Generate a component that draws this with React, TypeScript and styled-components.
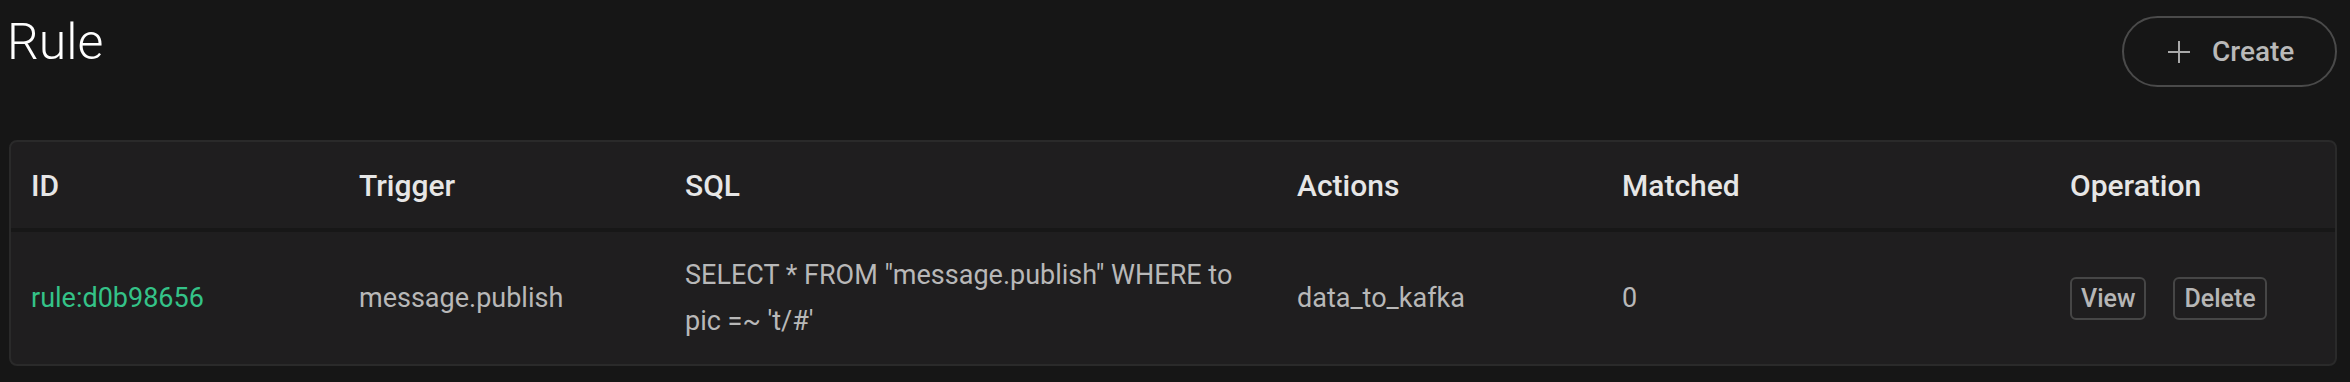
import React from "react";
import styled, { createGlobalStyle } from "styled-components";

type Rule = {
  id: string;
  trigger: string;
  sql: string;
  actions: string;
  matched: number;
};

const rules: Rule[] = [
  {
    id: "rule:d0b98656",
    trigger: "message.publish",
    sql: `SELECT * FROM "message.publish" WHERE topic =~ 't/#'`,
    actions: "data_to_kafka",
    matched: 0,
  },
];

const columns = [
  { title: "ID", width: 328 },
  { title: "Trigger", width: 326 },
  { title: "SQL", width: 612 },
  { title: "Actions", width: 325 },
  { title: "Matched", width: 448 },
  { title: "Operation" },
];

const GlobalStyle = createGlobalStyle`
  html, body {
    margin: 0;
    background: #161616;
    font-family: Roboto, "Liberation Sans", sans-serif;
  }
`;

const PlusIcon = () => (
  <svg width="22" height="22" viewBox="0 0 22 22" fill="none">
    <path d="M11 0v22M0 11h22" stroke="#a9a9a9" strokeWidth="2" />
  </svg>
);

const App = () => {
  return (
    <>
      <GlobalStyle />
      <Page>
        <Header>
          <Title>Rule</Title>
          <CreateButton>
            <PlusIcon />
            Create
          </CreateButton>
        </Header>
        <Card>
          <Table>
            <colgroup>
              {columns.map((c) => (
                <col key={c.title} style={c.width ? { width: c.width } : undefined} />
              ))}
            </colgroup>
            <thead>
              <tr>
                {columns.map((c) => (
                  <Th key={c.title}>{c.title}</Th>
                ))}
              </tr>
            </thead>
            <tbody>
              {rules.map((r) => (
                <tr key={r.id}>
                  <Td>
                    <IdLink href="#">{r.id}</IdLink>
                  </Td>
                  <Td>{r.trigger}</Td>
                  <Td>
                    <SqlText>{r.sql}</SqlText>
                  </Td>
                  <Td>{r.actions}</Td>
                  <Td>{r.matched}</Td>
                  <Td>
                    <Ops>
                      <SmallButton>View</SmallButton>
                      <SmallButton>Delete</SmallButton>
                    </Ops>
                  </Td>
                </tr>
              ))}
            </tbody>
          </Table>
        </Card>
      </Page>
    </>
  );
};

const Page = styled.div`
  padding: 16px 13px 0 9px;
`;
const Header = styled.div`
  display: flex;
  justify-content: space-between;
  align-items: flex-start;
  height: 71px;
  margin-bottom: 53px;
`;
const Title = styled.h1`
  margin: -3px 0 0 -2px;
  font-size: 50px;
  font-weight: 300;
  line-height: 58px;
  color: #ffffff;
`;
const CreateButton = styled.button`
  display: flex;
  align-items: center;
  gap: 22px;
  height: 71px;
  width: 215px;
  padding: 0 0 0 44px;
  box-sizing: border-box;
  border: 2px solid #4a4a4a;
  border-radius: 36px;
  background: transparent;
  color: #b9b9b9;
  font-family: Roboto, "Liberation Sans", sans-serif;
  font-size: 28px;
  font-weight: 500;
  cursor: pointer;
`;
const Card = styled.div`
  border: 2px solid #2a2a2a;
  border-radius: 8px;
  background: #1f1e1f;
  overflow: hidden;
`;
const Table = styled.table`
  width: 100%;
  table-layout: fixed;
  border-collapse: collapse;
`;
const Th = styled.th`
  height: 86px;
  padding: 0 20px;
  text-align: left;
  font-size: 30px;
  font-weight: 500;
  color: #e6e6e6;
  border-bottom: 4px solid #171717;
`;
const Td = styled.td`
  height: 131px;
  padding: 20px;
  box-sizing: border-box;
  font-size: 27px;
  line-height: 46px;
  color: #b8b8b8;
  vertical-align: middle;
`;
const SqlText = styled.div`
  max-width: 554px;
  word-break: break-all;
`;
const IdLink = styled.a`
  color: #34c388;
  text-decoration: none;
`;
const Ops = styled.div`
  display: flex;
  gap: 27px;
  align-items: center;
`;
const SmallButton = styled.button`
  height: 43px;
  padding: 0 9px;
  border: 2px solid #464646;
  border-radius: 6px;
  background: transparent;
  color: #b6b6b6;
  font-family: Roboto, "Liberation Sans", sans-serif;
  font-size: 25px;
  font-weight: 500;
  cursor: pointer;
`;

export default App;
